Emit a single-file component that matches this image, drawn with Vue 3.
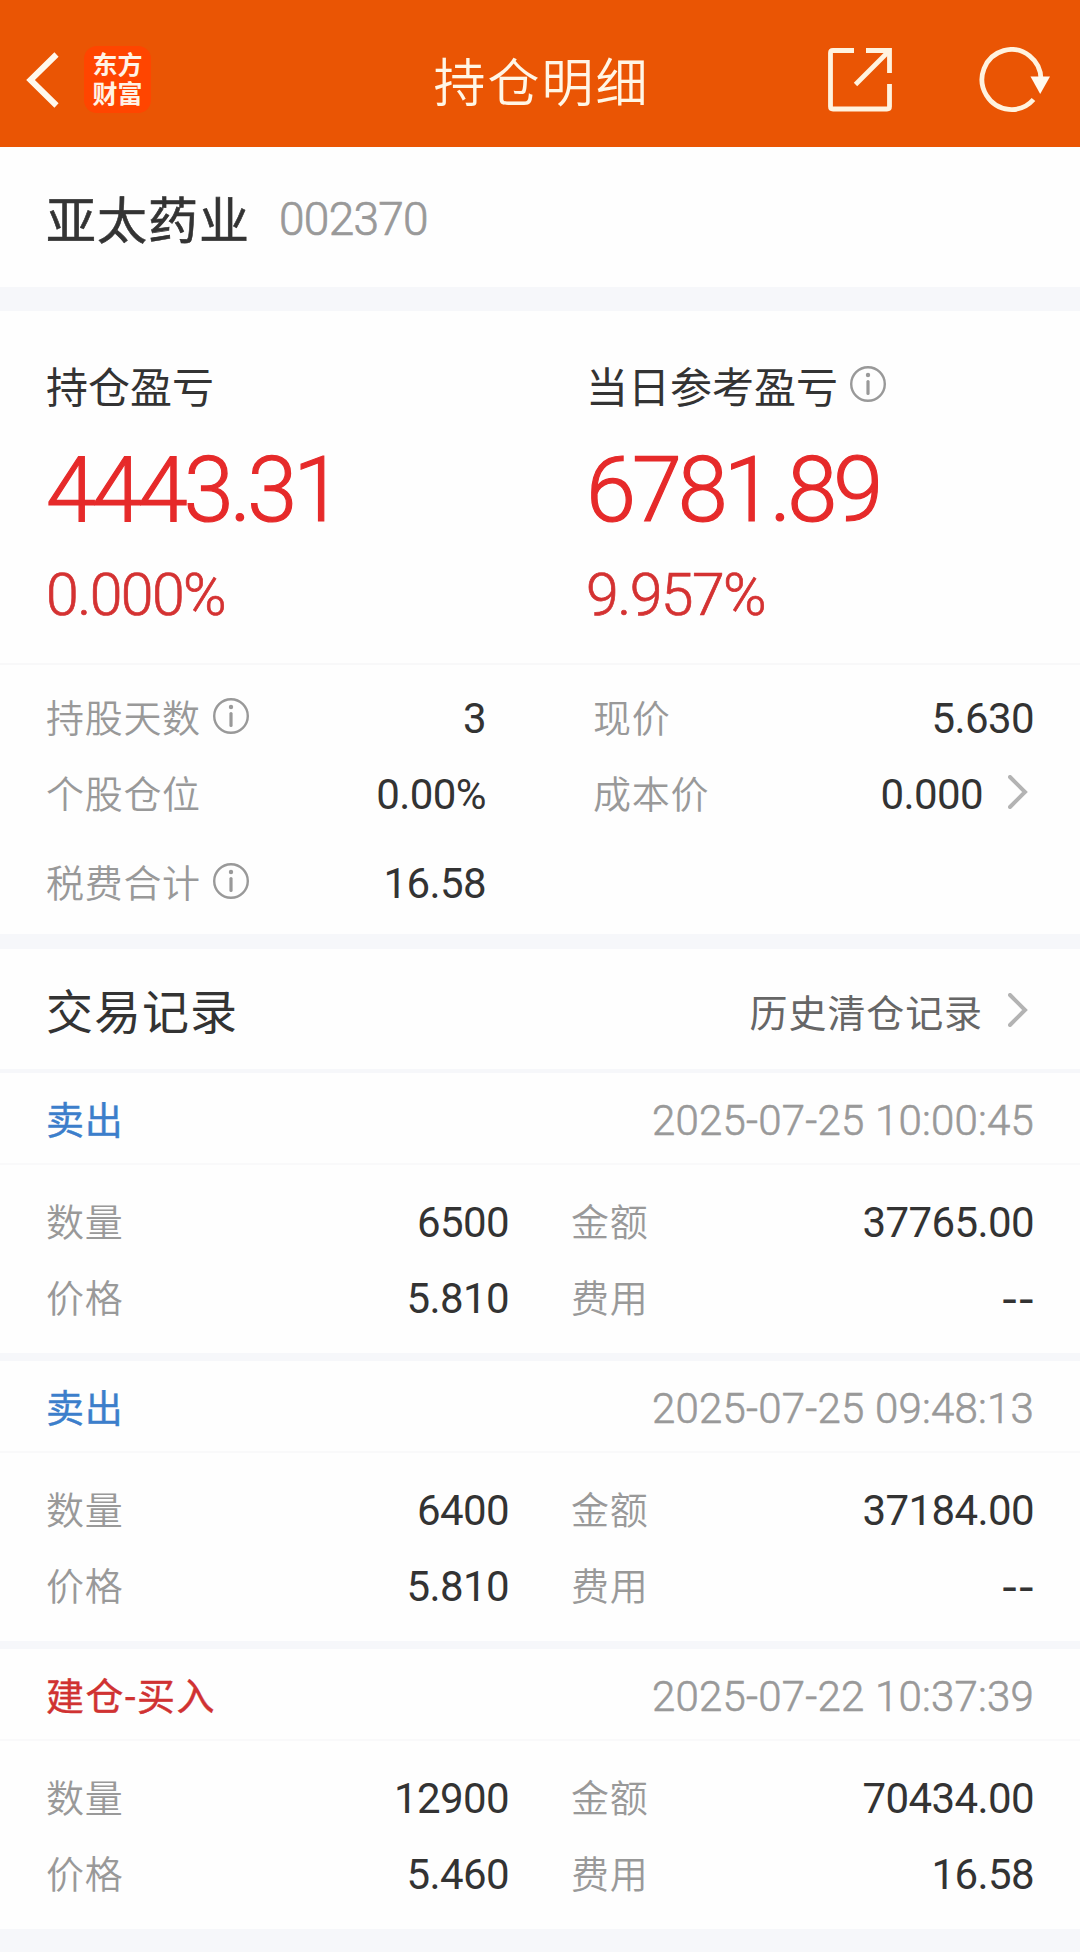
<template>
  <div class="page">
    <header class="navbar">
      <svg class="back" width="34" height="56" viewBox="0 0 34 56">
        <path d="M30.5 2.5 L4.5 28 L30.5 53.5" fill="none" stroke="#fff8ec" stroke-width="6" />
      </svg>
      <div class="logo">
        <span>东方</span>
        <span>财富</span>
      </div>
      <h1 class="title">持仓明细</h1>
      <svg class="share" width="64" height="64" viewBox="0 0 64 64">
        <g fill="none" stroke="#fff3df" stroke-width="4.8">
          <path d="M26 2.5 H5 Q2.5 2.5 2.5 5 V58.5 Q2.5 61 5 61 H59 Q61.5 61 61.5 58.5 V36" />
          <path d="M38 2.5 H61.5 V25" />
          <path d="M60 4 L27.5 36.5" />
        </g>
      </svg>
      <svg class="refresh" width="74" height="66" viewBox="0 0 74 66">
        <path d="M55.5 52.5 A29.5 30 0 1 1 63 33" fill="none" stroke="#fff3df" stroke-width="4.8" />
        <path d="M52.5 29.5 H72 L62.2 47 Z" fill="#fffaf0" />
      </svg>
    </header>

    <section class="stock">
      <span class="stock-name">{{ stock.name }}</span>
      <span class="stock-code">{{ stock.code }}</span>
    </section>

    <section class="profit">
      <div v-for="item in profits" :key="item.label" class="profit-item">
        <div class="profit-label">
          <span>{{ item.label }}</span>
          <svg v-if="item.info" class="info" width="36" height="36" viewBox="0 0 36 36">
            <circle cx="18" cy="18" r="16.8" />
            <path d="M18 15.5 V27.5" />
            <circle class="dot" cx="18" cy="9" r="2.2" />
          </svg>
        </div>
        <div class="profit-amount">{{ item.amount }}</div>
        <div class="profit-rate">{{ item.rate }}</div>
      </div>
    </section>

    <section class="stats">
      <div class="stats-col">
        <div v-for="item in leftStats" :key="item.label" class="stat">
          <span class="label">{{ item.label }}</span>
          <svg v-if="item.info" class="info" width="36" height="36" viewBox="0 0 36 36">
            <circle cx="18" cy="18" r="16.8" />
            <path d="M18 15.5 V27.5" />
            <circle class="dot" cx="18" cy="9" r="2.2" />
          </svg>
          <span class="value">{{ item.value }}</span>
        </div>
      </div>
      <div class="stats-col right">
        <div v-for="item in rightStats" :key="item.label" class="stat">
          <span class="label">{{ item.label }}</span>
          <span class="value">{{ item.value }}</span>
          <svg v-if="item.link" class="arrow" width="20" height="34" viewBox="0 0 20 34">
            <path d="M2 2 L17 17 L2 32" />
          </svg>
        </div>
      </div>
    </section>

    <section class="records-head">
      <h2>交易记录</h2>
      <span class="history">历史清仓记录</span>
      <svg class="arrow" width="20" height="34" viewBox="0 0 20 34">
        <path d="M2 2 L17 17 L2 32" />
      </svg>
    </section>

    <section v-for="record in records" :key="record.time" class="record">
      <div class="record-head">
        <span class="record-type" :class="record.side">{{ record.type }}</span>
        <span class="record-time">{{ record.time }}</span>
      </div>
      <div class="record-body">
        <div class="cell"><span class="label">数量</span><span class="value">{{ record.count }}</span></div>
        <div class="cell"><span class="label">金额</span><span class="value">{{ record.amount }}</span></div>
        <div class="cell"><span class="label">价格</span><span class="value">{{ record.price }}</span></div>
        <div class="cell">
          <span class="label">费用</span>
          <span class="value" :class="{ empty: record.fee === '--' }">{{ record.fee }}</span>
        </div>
      </div>
    </section>
  </div>
</template>

<script setup>
import { ref } from "vue";

const stock = ref({ name: "亚太药业", code: "002370" });

const profits = ref([
  { label: "持仓盈亏", amount: "4443.31", rate: "0.000%", info: false },
  { label: "当日参考盈亏", amount: "6781.89", rate: "9.957%", info: true },
]);

const leftStats = ref([
  { label: "持股天数", value: "3", info: true },
  { label: "个股仓位", value: "0.00%", info: false },
  { label: "税费合计", value: "16.58", info: true },
]);

const rightStats = ref([
  { label: "现价", value: "5.630", link: false },
  { label: "成本价", value: "0.000", link: true },
]);

const records = ref([
  { type: "卖出", side: "sell", time: "2025-07-25 10:00:45", count: "6500", amount: "37765.00", price: "5.810", fee: "--" },
  { type: "卖出", side: "sell", time: "2025-07-25 09:48:13", count: "6400", amount: "37184.00", price: "5.810", fee: "--" },
  { type: "建仓-买入", side: "buy", time: "2025-07-22 10:37:39", count: "12900", amount: "70434.00", price: "5.460", fee: "16.58" },
]);
</script>

<style>
body {
  margin: 0;
  background: #f6f7fa;
}
</style>

<style scoped>
.page {
  width: 1080px;
  height: 1952px;
  overflow: hidden;
  background: #f6f7fa;
  color: #333;
  font-family: Roboto, "Noto Sans CJK SC", sans-serif;
  line-height: 1;
}

.page section {
  box-sizing: border-box;
  background: #fefefe;
}

.navbar {
  position: relative;
  display: flex;
  align-items: center;
  box-sizing: border-box;
  height: 147px;
  padding: 12px 28px 0 26px;
  background: #ea5504;
}

.logo {
  display: flex;
  flex-direction: column;
  align-items: center;
  justify-content: center;
  gap: 4px;
  width: 67px;
  height: 67px;
  margin-left: 24px;
  border-radius: 13px;
  background: #ff4500;
  color: #fff3e6;
  font-size: 25px;
  font-weight: 700;
}

.title {
  position: absolute;
  left: 3px;
  right: 0;
  top: 58px;
  margin: 0;
  color: #fff6e6;
  font-size: 52px;
  font-weight: 350;
  line-height: 54px;
  letter-spacing: 2px;
  text-align: center;
}

.share {
  margin-left: auto;
}

.refresh {
  margin-left: 86px;
}

.stock {
  display: flex;
  align-items: center;
  height: 140px;
  padding: 4px 46px 0;
}

.stock-name {
  padding-top: 6px;
  font-size: 50px;
  font-weight: 400;
  letter-spacing: 1px;
  -webkit-text-stroke: 0.6px #333;
}

.stock-code {
  margin-left: 29px;
  color: #999;
  font-size: 46px;
  font-weight: 300;
  letter-spacing: -0.7px;
  -webkit-text-stroke: 0.7px #999;
}

.profit {
  display: grid;
  grid-template-columns: 540px 540px;
  height: 354px;
  margin-top: 24px;
  padding-top: 52px;
  border-bottom: 2px solid #f8f8f9;
}

.profit-item {
  padding-left: 46px;
}

.profit-label {
  display: flex;
  align-items: center;
  height: 46px;
  font-size: 42px;
}

.profit-label span {
  padding-top: 6px;
}

.profit-label .info {
  margin: -4px 0 0 12px;
}

.profit-amount {
  margin-top: 37px;
  color: #e62a2a;
  font-size: 90px;
  font-weight: 300;
  line-height: 90px;
  letter-spacing: -4px;
  -webkit-text-stroke: 1.2px #e62a2a;
}

.profit-rate {
  margin-top: 29px;
  color: #d43232;
  font-size: 59px;
  font-weight: 300;
  line-height: 59px;
  letter-spacing: -1.6px;
  -webkit-text-stroke: 0.7px #d43232;
}

.info {
  flex: none;
  fill: none;
  stroke: #999;
  stroke-width: 2.4;
}

.info path {
  stroke-width: 3.2;
  stroke-linecap: round;
}

.info .dot {
  fill: #999;
  stroke: none;
}

.arrow {
  flex: none;
  margin: -3px 6px 0 25px;
  fill: none;
  stroke: #b3b3b3;
  stroke-width: 4;
  stroke-linecap: round;
}

.stats {
  display: flex;
  height: 269px;
  padding: 14px 46px 0;
}

.stats-col {
  width: 440px;
}

.stats-col.right {
  width: 441px;
  margin-left: 107px;
}

.stat {
  display: flex;
  align-items: center;
  height: 76px;
}

.stat:nth-child(3) {
  margin-top: 13px;
}

.stat .info {
  margin: -3px 0 0 12px;
}

.label {
  padding-top: 3px;
  color: #999;
  font-size: 38px;
  font-weight: 350;
  letter-spacing: 0.7px;
}

.value {
  margin-left: auto;
  padding-top: 3px;
  font-size: 42px;
  letter-spacing: -0.6px;
}

/* placeholder dashes are drawn wider than Roboto's hyphen */
.value.empty {
  font-family: Inter, sans-serif;
  font-size: 38px;
  font-weight: 500;
  letter-spacing: -1px;
}

.records-head {
  display: flex;
  align-items: center;
  height: 120px;
  margin-top: 15px;
  padding: 4px 46px 0;
}

.records-head h2 {
  margin: 0;
  padding-top: 3px;
  font-size: 47px;
  font-weight: 400;
  letter-spacing: 1px;
}

.history {
  margin: 6px 0 0 auto;
  color: #666;
  font-size: 38px;
  font-weight: 400;
  letter-spacing: 0.9px;
}

.record {
  height: 280px;
  margin-bottom: 8px;
}

.records-head + .record {
  margin-top: 4px;
}

.record-head {
  display: flex;
  align-items: center;
  justify-content: space-between;
  height: 92px;
  padding: 4px 46px 0;
  box-sizing: border-box;
  border-bottom: 2px solid #f9f9fa;
}

.record-type {
  padding-top: 1px;
  font-size: 38px;
  font-weight: 400;
  letter-spacing: 0.8px;
  -webkit-text-stroke: 0.4px currentColor;
}

.sell {
  color: #3c7ecb;
}

.buy {
  color: #d03232;
  letter-spacing: 1.5px;
}

.record-time {
  padding-top: 2px;
  color: #999;
  font-size: 42px;
  font-weight: 300;
  letter-spacing: 0.2px;
  -webkit-text-stroke: 0.6px #999;
}

.record-body {
  display: grid;
  grid-template-columns: 463px 463px;
  column-gap: 62px;
  padding: 18px 46px 0;
}

.cell {
  display: flex;
  align-items: center;
  height: 76px;
}
</style>
